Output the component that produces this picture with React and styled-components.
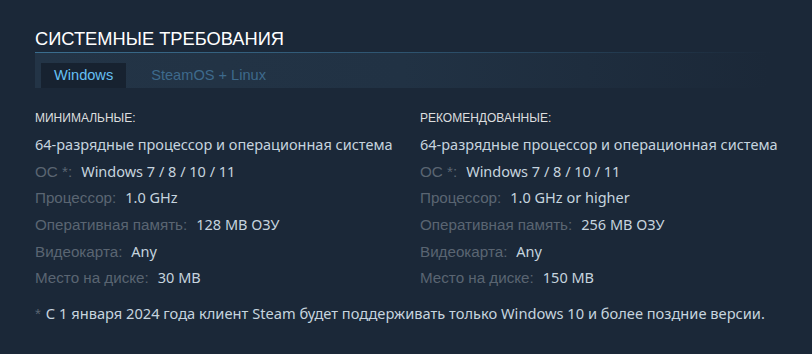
import React from 'react'
import styled, { createGlobalStyle } from 'styled-components'

const GlobalStyle = createGlobalStyle`
  html, body {
    margin: 0;
    padding: 0;
    background: #1b2838;
  }
`

const Page = styled.div`
  width: 812px;
  height: 354px;
  box-sizing: border-box;
  padding: 26px 42px 0 35px;
  background: #1b2838;
  font-family: "Liberation Sans", Arial, sans-serif;
  overflow: hidden;
`

const Title = styled.h2`
  margin: 0;
  font-size: 18.3px;
  line-height: 25px;
  font-weight: normal;
  color: #ffffff;
  text-transform: uppercase;
  padding-bottom: 1px;
  border-bottom: 1px solid transparent;
  border-image: linear-gradient(to right, #3b6e8f 0%, #2e5470 50%, rgba(27, 40, 56, 0) 100%) 1;
`

const TabBar = styled.div`
  display: flex;
  align-items: flex-end;
  height: 35px;
  padding-left: 6px;
  background: linear-gradient(to right, #233446 0%, #213244 50%, rgba(27, 40, 56, 0) 100%);
`

const Tab = styled.div`
  height: 25px;
  line-height: 25px;
  padding: 0 13px;
  font-size: 14.6px;
  color: ${p => (p.$active ? '#66c0f4' : '#3e6a8c')};
  background: ${p => (p.$active ? '#172230' : 'transparent')};
  margin-right: ${p => (p.$active ? '12px' : '0')};
`

const Columns = styled.div`
  display: grid;
  grid-template-columns: 385px 1fr;
  padding-top: 21px;
`

const Column = styled.div`
  display: flex;
  flex-direction: column;
`

const Heading = styled.div`
  font-size: 12px;
  line-height: 18px;
  color: #dcdedf;
  margin-bottom: 8px;
`

const Row = styled.div`
  display: flex;
  align-items: baseline;
  height: 18px;
  line-height: 18px;
  margin-bottom: 8.7px;
  white-space: nowrap;
`

const Label = styled.span`
  font-size: 15.2px;
  color: #5a6572;
  margin-right: 9px;
`

const Value = styled.span`
  font-family: "Noto Sans", "Open Sans", sans-serif;
  font-size: 14.5px;
  color: #c6d4df;
`

const Note = styled.div`
  display: flex;
  align-items: baseline;
  height: 18px;
  line-height: 18px;
  margin-top: 9px;
  color: #c6d4df;
  white-space: nowrap;
`

const Star = styled.span`
  font-size: 15px;
  color: #5a6572;
  margin-right: 5px;
`

const NoteText = styled.span`
  font-family: "Noto Sans", "Open Sans", sans-serif;
  font-size: 14.65px;
`

const minimal = [
  ['ОС *:', 'Windows 7 / 8 / 10 / 11'],
  ['Процессор:', '1.0 GHz'],
  ['Оперативная память:', '128 MB ОЗУ'],
  ['Видеокарта:', 'Any'],
  ['Место на диске:', '30 MB'],
]

const recommended = [
  ['ОС *:', 'Windows 7 / 8 / 10 / 11'],
  ['Процессор:', '1.0 GHz or higher'],
  ['Оперативная память:', '256 MB ОЗУ'],
  ['Видеокарта:', 'Any'],
  ['Место на диске:', '150 MB'],
]

function Requirements({ heading, rows }) {
  return (
    <Column>
      <Heading>{heading}</Heading>
      <Row>
        <Value>64-разрядные процессор и операционная система</Value>
      </Row>
      {rows.map(([label, value]) => (
        <Row key={label}>
          <Label>{label}</Label>
          <Value>{value}</Value>
        </Row>
      ))}
    </Column>
  )
}

export default function App() {
  return (
    <>
      <GlobalStyle />
      <Page>
        <Title>Системные требования</Title>
        <TabBar>
          <Tab $active>Windows</Tab>
          <Tab>SteamOS + Linux</Tab>
        </TabBar>
        <Columns>
          <Requirements heading="МИНИМАЛЬНЫЕ:" rows={minimal} />
          <Requirements heading="РЕКОМЕНДОВАННЫЕ:" rows={recommended} />
        </Columns>
        <Note>
          <Star>*</Star>
          <NoteText>С 1 января 2024 года клиент Steam будет поддерживать только Windows 10 и более поздние версии.</NoteText>
        </Note>
      </Page>
    </>
  )
}
